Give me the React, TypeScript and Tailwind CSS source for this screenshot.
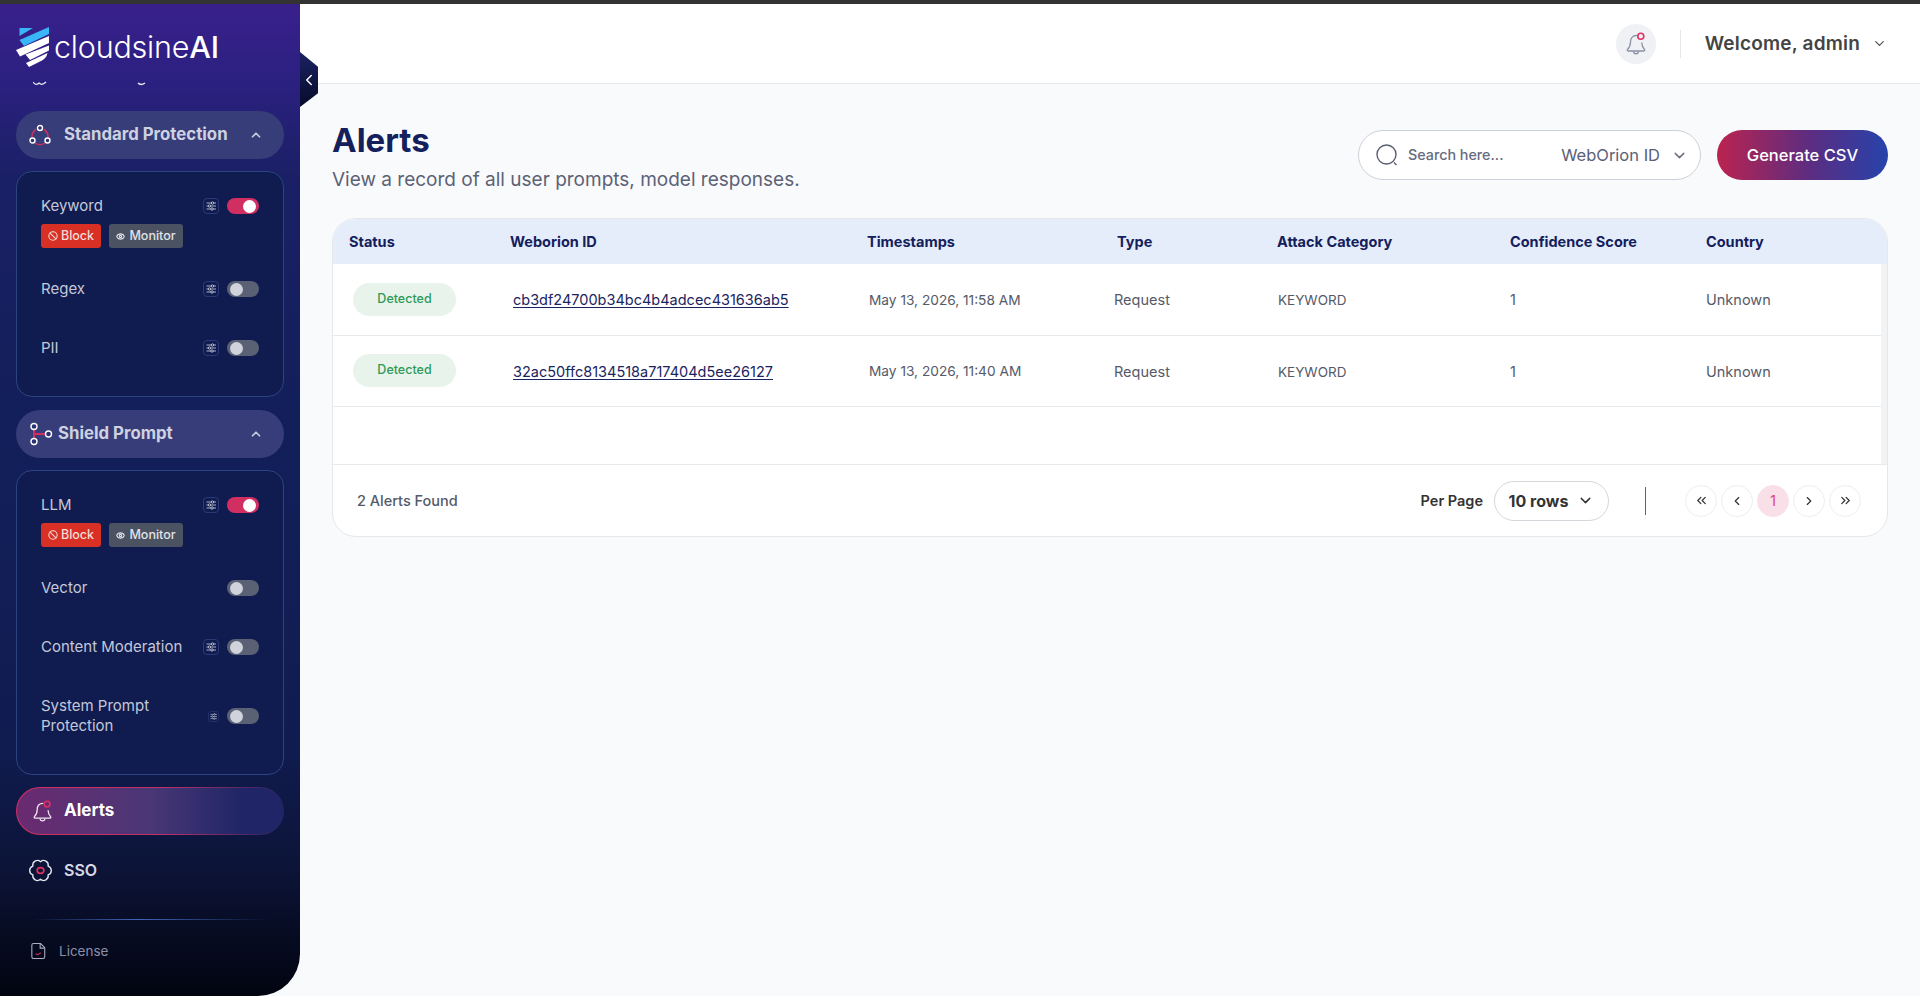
import React from "react";
import { Ban, ChevronDown, ChevronLeft, ChevronRight, ChevronUp, ChevronsLeft, ChevronsRight, Eye } from "lucide-react";

function Logo() {
  return (
    <svg width="34" height="40" viewBox="0 0 34 40" className="shrink-0">
      <path d="M3.500 1H17L3.500 9Z" fill="#38b6f7" />
      <path d="M33 0V7L8 19L3.500 13Z" fill="#38b6f7" />
      <path d="M33 9V16L4 29.500L0 23Z" fill="#fff" />
      <path d="M33 18.500V23.500L14 33L9.500 27.500Z" fill="#fff" />
      <path d="M31.500 26C30.500 31 27 33 24 34.500L13 40L10 36L31.500 26Z" fill="#fff" />
    </svg>
  );
}

function NetIcon() {
  return (
    <svg width="22" height="22" viewBox="0 0 22 22" fill="none" className="shrink-0">
      <path d="M7 5.500A9 9 0 0 0 3 14M15 5.500A9 9 0 0 1 19 14M6 19A9 9 0 0 0 16 19" stroke="#d12f62" strokeWidth="1.500" />
      <circle cx="11" cy="4" r="2.500" stroke="#fff" strokeWidth="1.400" fill="#2b3272" />
      <circle cx="3.500" cy="16.500" r="2.500" stroke="#fff" strokeWidth="1.400" fill="#2b3272" />
      <circle cx="18.500" cy="16.500" r="2.500" stroke="#fff" strokeWidth="1.400" fill="#2b3272" />
    </svg>
  );
}

function BranchIcon() {
  return (
    <svg width="24" height="24" viewBox="0 0 24 24" fill="none" className="shrink-0">
      <path d="M5 6V18M5 12H17" stroke="#d12f62" strokeWidth="2" />
      <circle cx="5" cy="4.500" r="3" stroke="#fff" strokeWidth="1.400" fill="#2b3272" />
      <circle cx="5" cy="19.500" r="3" stroke="#fff" strokeWidth="1.400" fill="#2b3272" />
      <circle cx="19.500" cy="12" r="3" stroke="#fff" strokeWidth="1.400" fill="#2b3272" />
    </svg>
  );
}

function BellIcon({ color, size }: { color: string; size: number }) {
  return (
    <svg width={size} height={size} viewBox="0 0 24 24" fill="none" className="shrink-0">
      <path d="M12.500 3.500C8.500 3.500 6.500 6.500 6.500 10C6.500 14 5.500 15.500 3.500 17.500C3 18.300 3.300 19 4.200 19H19.800C20.700 19 21 18.300 20.500 17.500C19 16 18 14.500 17.800 11" stroke={color} strokeWidth="1.300" strokeLinecap="round" />
      <path d="M9.500 19.500C9.800 22.500 14.200 22.500 14.500 19.500" stroke={color} strokeWidth="1.300" />
      <circle cx="16.800" cy="4.200" r="3" stroke="#e0305f" strokeWidth="1.600" />
    </svg>
  );
}

function GearIcon() {
  return (
    <svg width="25" height="25" viewBox="0 0 24 24" fill="none" className="shrink-0">
      <path d="M12 3.500A4.500 4.500 0 0 1 19.360 7.750A4.500 4.500 0 0 1 19.360 16.250A4.500 4.500 0 0 1 12 20.500A4.500 4.500 0 0 1 4.640 16.250A4.500 4.500 0 0 1 4.640 7.750A4.500 4.500 0 0 1 12 3.500Z" stroke="#e4e6ee" strokeWidth="1.300" />
      <ellipse cx="12" cy="12" rx="3.200" ry="2.800" stroke="#e0305f" strokeWidth="1.600" />
    </svg>
  );
}

function DocIcon() {
  return (
    <svg width="15" height="18" viewBox="0 0 18 20" fill="none" className="shrink-0">
      <path d="M3 1H11.500L16.500 6V17A2 2 0 0 1 14.500 19H3A2 2 0 0 1 1 17V3A2 2 0 0 1 3 1Z" stroke="#a9aec4" strokeWidth="1.300" />
      <path d="M11 1.500V6.500H16" stroke="#a9aec4" strokeWidth="1.300" />
      <path d="M6 13.500L8 14.500L11.500 12.500" stroke="#d12f62" strokeWidth="1.300" strokeLinecap="round" />
    </svg>
  );
}

function Toggle({ on }: { on?: boolean }) {
  return on ? (
    <span className="flex h-4 w-8 shrink-0 items-center justify-end rounded-full bg-[#d12f62] pr-[3px]">
      <span className="h-[13px] w-[13px] rounded-full bg-white" />
    </span>
  ) : (
    <span className="flex h-4 w-8 shrink-0 items-center rounded-full bg-[#5b6175] pl-[3px]">
      <span className="h-[13px] w-[13px] rounded-full bg-[#d0d3dc]" />
    </span>
  );
}

function TuneGlyph({ size }: { size: number }) {
  return (
    <svg width={size} height={size} viewBox="0 0 10 10" fill="none">
      <path d="M0.500 2H10M0.500 5H10M0.500 8H10" stroke="#d5d8e4" strokeWidth="0.800" />
      <circle cx="6.500" cy="2" r="1.200" fill="#101c50" stroke="#d5d8e4" strokeWidth="0.800" />
      <circle cx="3.500" cy="5" r="1.200" fill="#101c50" stroke="#d5d8e4" strokeWidth="0.800" />
      <circle cx="6" cy="8" r="1.200" fill="#101c50" stroke="#d5d8e4" strokeWidth="0.800" />
    </svg>
  );
}

function Tune({ small }: { small?: boolean }) {
  return small ? (
    <span className="mr-2 flex h-[11px] w-[11px] shrink-0 items-center justify-center rounded-[3px] border border-[#22306a]">
      <TuneGlyph size={7} />
    </span>
  ) : (
    <span className="mr-2 flex h-4 w-4 shrink-0 items-center justify-center rounded-[4px] border border-[#2a3a78]">
      <TuneGlyph size={10} />
    </span>
  );
}

function ItemRow({ label, tune = true, on, small }: { label: string; tune?: boolean; on?: boolean; small?: boolean }) {
  return (
    <div className={`flex items-center ${small ? "h-10" : "h-4"}`}>
      <span className="flex-1 text-[15px] leading-5 text-[#c4c8d8]">{label}</span>
      {tune && <Tune small={small} />}
      <Toggle on={on} />
    </div>
  );
}

function Badges() {
  return (
    <div className="mt-[10px] flex gap-2 text-[12.500px] font-medium">
      <span className="flex h-6 w-[60px] items-center justify-center gap-[3px] rounded-[3px] bg-[#d93025] text-[#f5dcd8]">
        <Ban size={10} strokeWidth={2.500} />
        Block
      </span>
      <span className="flex h-6 w-[74px] items-center justify-center gap-[4px] rounded-[3px] bg-[#4b5262] text-[#e0e2e8]">
        <Eye size={9} strokeWidth={3} />
        Monitor
      </span>
    </div>
  );
}

function SectionPill({ icon, label, gap }: { icon: React.ReactNode; label: string; gap: string }) {
  return (
    <div className="flex h-12 items-center rounded-full bg-[#373d78] pl-[13px] pr-[21px]">
      <span className={`flex items-center ${gap}`}>
        {icon}
        <span className="text-[16.800px] font-bold text-[#ced1e0]">{label}</span>
      </span>
      <ChevronUp size={14} strokeWidth={3} color="#c8cbdb" className="ml-auto" />
    </div>
  );
}

function Sidebar() {
  return (
    <aside className="relative h-[992px] w-[300px] shrink-0">
      <div className="flex h-full flex-col overflow-hidden rounded-br-[42px] bg-[linear-gradient(180deg,#39208c_0%,#2b2080_8%,#1b2066_17%,#131f5a_40%,#101c50_75%,#0c1438_87%,#02040f_100%)] px-4 pt-6">
        <div className="flex h-[38px] items-center gap-[4px]">
          <Logo />
          <span className="text-[30.500px] font-light tracking-[-0.200px] text-white">
            cloudsine<span className="font-medium">AI</span>
          </span>
        </div>
        <svg width="120" height="6" viewBox="0 0 120 6" fill="none" className="ml-[17px] mt-[15px] shrink-0">
          <path d="M0 1C2 4 4 4 6 2C8 4 10 4 13 1" stroke="#e8e9f4" strokeWidth="1.200" />
          <path d="M105 2C107 4 109 4 112 2" stroke="#e8e9f4" strokeWidth="1.500" />
        </svg>
        <div className="mt-[24px]">
          <SectionPill icon={<NetIcon />} label="Standard Protection" gap="gap-[13px]" />
        </div>
        <div className="mt-3 h-[226px] shrink-0 rounded-2xl border border-[#2b4583] bg-[#101c50] px-[24px] pt-[26px]">
          <ItemRow label="Keyword" on />
          <Badges />
          <div className="mt-[33px]"><ItemRow label="Regex" /></div>
          <div className="mt-[43px]"><ItemRow label="PII" /></div>
        </div>
        <div className="mt-[13px]">
          <SectionPill icon={<BranchIcon />} label="Shield Prompt" gap="gap-[5px]" />
        </div>
        <div className="mt-3 h-[305px] shrink-0 rounded-2xl border border-[#2b4583] bg-[#101c50] px-[24px] pt-[26px]">
          <ItemRow label="LLM" on />
          <Badges />
          <div className="mt-[33px]"><ItemRow label="Vector" tune={false} /></div>
          <div className="mt-[43px]"><ItemRow label="Content Moderation" /></div>
          <div className="mt-[41px]"><ItemRow label="System Prompt Protection" small /></div>
        </div>
        <div className="mt-3 rounded-full bg-[linear-gradient(90deg,#d12f62_0%,#c02f68_55%,#1f2566_100%)] p-px">
          <div className="flex h-[46px] items-center gap-[10px] rounded-full bg-[linear-gradient(90deg,#6a2a70_0%,#4a3776_50%,#1f2566_85%)] pl-[14px]">
            <BellIcon color="#f0e6f0" size={23} />
            <span className="text-[17px] font-bold text-white">Alerts</span>
          </div>
        </div>
        <div className="mt-[11px] flex h-12 items-center gap-[11px] pl-[12px]">
          <GearIcon />
          <span className="text-[16px] font-semibold text-[#d8dae6]">SSO</span>
        </div>
        <div className="mx-4 mt-[25px] h-px bg-[linear-gradient(90deg,transparent,#3f66bb_45%,transparent)]" />
        <div className="mt-[19px] flex h-6 items-center gap-[13px] pl-[15px]">
          <DocIcon />
          <span className="text-[13.500px] text-[#8a8ea8]">License</span>
        </div>
      </div>
      <div className="absolute left-[300px] top-[48px] flex h-[55px] w-[18px] items-center justify-center bg-[linear-gradient(180deg,#1a2264,#070b28)] [clip-path:polygon(0_0,100%_27%,100%_75%,0_100%)]">
        <ChevronLeft size={18} color="#fff" strokeWidth={2} />
      </div>
    </aside>
  );
}

const gridCols = "grid grid-cols-[177px_357px_250px_160px_233px_196px_1fr]";

function Row({ id, time }: { id: string; time: string }) {
  return (
    <div className={`${gridCols} h-[71.500px] items-center border-b border-[#e8eaee] bg-white text-[14.500px] text-[#555a68]`}>
      <div className="pl-[20px]">
        <span className="flex h-[33px] w-[103px] items-center justify-center rounded-full bg-[#e8f3ec] text-[12.500px] font-medium text-[#2f9a58]">Detected</span>
      </div>
      <a className="pl-[3px] pt-[2px] text-[14.500px] text-[#1a2460] underline underline-offset-2">{id}</a>
      <div className="pl-[2px] pt-[2px] text-[13.700px]">{time}</div>
      <div className="-ml-[3px] pt-[2px]">Request</div>
      <div className="pl-px pt-[2px] text-[13.500px]">KEYWORD</div>
      <div className="pt-[2px]">1</div>
      <div className="pt-[2px]">Unknown</div>
    </div>
  );
}

function PageBtn({ children, active }: { children: React.ReactNode; active?: boolean }) {
  return (
    <span className={`flex h-8 w-8 items-center justify-center rounded-full border ${active ? "border-[#f9dfe8] bg-[#f9dfe8] text-[#e0407a]" : "border-[#eceef1] bg-white text-[#333]"} text-[14px]`}>
      {children}
    </span>
  );
}

export default function App() {
  return (
    <div className="h-[996px] w-[1920px] overflow-hidden bg-[#f9fafc] font-[Inter,sans-serif]">
      <div className="h-1 bg-[#333]" />
      <div className="flex">
        <Sidebar />
        <main className="flex h-[992px] min-w-0 flex-1 flex-col">
          <header className="flex h-[80px] shrink-0 items-center justify-end border-b border-[#e6e8ec] bg-white pr-[33px]">
            <span className="flex h-10 w-10 items-center justify-center rounded-full bg-[#eff1f4]">
              <BellIcon color="#8a90a2" size={24} />
            </span>
            <span className="ml-6 h-7 w-px bg-[#e5e7eb]" />
            <span className="ml-[24px] pt-[2px] text-[19px] font-semibold tracking-[0.200px] text-[#444]">Welcome, admin</span>
            <ChevronDown size={15} color="#555" className="ml-[12px]" />
          </header>
          <div className="flex-1 px-8 pt-[36px]">
            <div className="flex items-start justify-between">
              <div>
                <h1 className="h-10 text-[33px] font-bold leading-10 text-[#14205c]">Alerts</h1>
                <p className="mt-[6px] text-[19px] leading-7 text-[#5c6276]">View a record of all user prompts, model responses.</p>
              </div>
              <div className="mt-[10px] flex gap-[16px]">
                <div className="flex h-[50px] w-[343px] items-center rounded-full border border-[#cdd0d8] bg-white pl-[17px] pr-[12px]">
                  <svg width="22" height="22" viewBox="0 0 22 22" fill="none" className="shrink-0">
                    <circle cx="10.500" cy="10.500" r="9.500" stroke="#5a6072" strokeWidth="1.400" />
                    <path d="M18 18.500L20.500 21" stroke="#5a6072" strokeWidth="1.400" />
                  </svg>
                  <span className="ml-[10px] text-[14.300px] font-medium text-[#666c80]">Search here...</span>
                  <span className="ml-auto text-[16.500px] text-[#5a6078]">WebOrion ID</span>
                  <ChevronDown size={17} color="#6a7080" className="ml-[11px]" />
                </div>
                <button className="h-[50px] w-[171px] rounded-full bg-[linear-gradient(90deg,#bb234f_0%,#5b2d82_55%,#2643ab_100%)] text-[16.500px] font-medium text-white">Generate CSV</button>
              </div>
            </div>
            <section className="mt-[24px] overflow-hidden rounded-3xl border border-[#e5e7eb] bg-white">
              <div className={`${gridCols} h-[45px] items-center bg-[#e5edfb] text-[14.500px] font-bold text-[#14205c]`}>
                <div className="pl-[16px]">Status</div>
                <div>Weborion ID</div>
                <div>Timestamps</div>
                <div>Type</div>
                <div>Attack Category</div>
                <div>Confidence Score</div>
                <div>Country</div>
              </div>
              <div className="border-r-[6px] border-[#f1f3f5]">
                <Row id="cb3df24700b34bc4b4adcec431636ab5" time="May 13, 2026, 11:58 AM" />
                <Row id="32ac50ffc8134518a717404d5ee26127" time="May 13, 2026, 11:40 AM" />
                <div className="h-[57px] bg-white" />
              </div>
              <div className="flex h-[72px] items-center border-t border-[#e8eaee] pl-[24px] pr-[26px] text-[#444]">
                <span className="text-[14.500px] font-medium text-[#555a68]">2 Alerts Found</span>
                <span className="ml-auto text-[14.500px] font-semibold text-[#333]">Per Page</span>
                <span className="ml-[11px] flex h-10 w-[115px] items-center justify-center gap-[9px] rounded-full border border-[#d5d7dd] bg-white text-[16px] font-bold text-[#333]">
                  10 rows
                  <ChevronDown size={17} color="#333" />
                </span>
                <span className="ml-[36px] h-7 w-px bg-[#5c6276]" />
                <div className="ml-[39px] flex gap-1">
                  <PageBtn><ChevronsLeft size={15} /></PageBtn>
                  <PageBtn><ChevronLeft size={14} /></PageBtn>
                  <PageBtn active>1</PageBtn>
                  <PageBtn><ChevronRight size={14} /></PageBtn>
                  <PageBtn><ChevronsRight size={15} /></PageBtn>
                </div>
              </div>
            </section>
          </div>
        </main>
      </div>
    </div>
  );
}
